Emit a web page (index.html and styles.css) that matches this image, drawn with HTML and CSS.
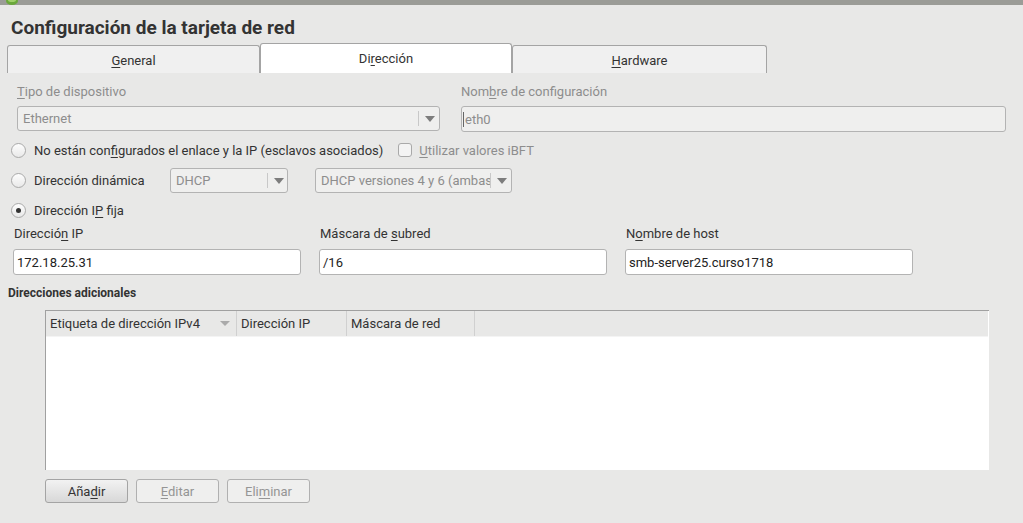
FILE: index.html
```html
<!DOCTYPE html>
<html lang="es">
<head>
<meta charset="utf-8">
<title>Configuración de la tarjeta de red</title>
<link rel="stylesheet" href="styles.css">
</head>
<body>
<div class="topbar"><svg class="appicon" width="16" height="6" viewBox="0 0 16 6"><ellipse cx="8" cy="1" rx="6" ry="4" fill="#6aa83a"/><ellipse cx="8" cy="0" rx="4" ry="2" fill="#9fd06a"/></svg></div>
<h1 class="title">Configuración de la tarjeta de red</h1>
<div class="tabs">
  <div class="tab"><span><u>G</u>eneral</span></div>
  <div class="tab active"><span>Di<u>r</u>ección</span></div>
  <div class="tab"><span><u>H</u>ardware</span></div>
</div>
<div class="content">
  <div class="devrow">
    <div class="field dev">
      <div class="label disabled"><u>T</u>ipo de dispositivo</div>
      <div class="combo disabled-box"><span class="ctext">Ethernet</span><span class="carrow"></span></div>
    </div>
    <div class="field conf">
      <div class="label disabled">Nom<u>b</u>re de configuración</div>
      <div class="input disabled-box"><span class="cursor"></span><span class="itext">eth0</span></div>
    </div>
  </div>
  <div class="radiorow">
    <span class="radio"></span><span class="rlabel">No están con<u>f</u>igurados el enlace y la IP (esclavos asociados)</span>
    <span class="check"></span><span class="clabel disabled"><u>U</u>tilizar valores iBFT</span>
  </div>
  <div class="radiorow">
    <span class="radio"></span><span class="rlabel dyn">Dirección dinámica</span>
    <div class="combo small disabled-box"><span class="ctext">DHCP</span><span class="carrow"></span></div>
    <div class="combo medium disabled-box"><span class="ctext">DHCP versiones 4 y 6 (ambas</span><span class="carrow"></span></div>
  </div>
  <div class="radiorow">
    <span class="radio on"></span><span class="rlabel">Dirección I<u>P</u> fija</span>
  </div>
  <div class="ipgrid">
    <div class="field">
      <div class="label">Direcció<u>n</u> IP</div>
      <div class="input white"><span class="itext">172.18.25.31</span></div>
    </div>
    <div class="field">
      <div class="label">Máscara de <u>s</u>ubred</div>
      <div class="input white"><span class="itext">/16</span></div>
    </div>
    <div class="field">
      <div class="label">N<u>o</u>mbre de host</div>
      <div class="input white"><span class="itext">smb-server25.curso1718</span></div>
    </div>
  </div>
  <div class="section">Direcciones adicionales</div>
  <div class="table">
    <div class="thead">
      <div class="th c1">Etiqueta de dirección IPv4<span class="sort"></span></div>
      <div class="th c2">Dirección IP</div>
      <div class="th c3">Máscara de red</div>
    </div>
    <div class="tbody"></div>
  </div>
  <div class="buttons">
    <button class="btn primary">Aña<u>d</u>ir</button>
    <button class="btn off"><u>E</u>ditar</button>
    <button class="btn off">Eli<u>m</u>inar</button>
  </div>
</div>
</body>
</html>
```
FILE: styles.css
```css
* { box-sizing: border-box; }
html, body { margin: 0; padding: 0; }
body {
  width: 1023px;
  height: 523px;
  overflow: hidden;
  background: #e8e8e7;
  font-family: Roboto, "Liberation Sans", sans-serif;
  font-size: 13px;
  color: #333;
}
u { text-decoration: underline; text-underline-offset: 2px; }
.topbar {
  height: 5px;
  background: #9b9c97;
  position: relative;
}
.appicon { position: absolute; left: 4px; top: 0; }
.title {
  margin: 0;
  padding: 11px 0 0 11px;
  height: 40px;
  font-size: 19px;
  line-height: 24px;
  font-weight: 700;
  color: #333;
}
.tabs {
  display: flex;
  align-items: flex-end;
  margin-left: 7px;
  height: 28px;
}
.tab {
  width: 253px;
  height: 28px;
  background: #f0f0f0;
  border: 1px solid #a4a4a4;
  border-bottom: none;
  border-radius: 3px 3px 0 0;
  display: flex;
  align-items: center;
  justify-content: center;
  padding-top: 2px;
}
.tab.active {
  width: 252px;
  height: 30px;
  background: #fff;
  padding-top: 0;
}
.tab:last-child { width: 255px; }
.content { padding-top: 11px; }
.label { height: 16px; line-height: 16px; }
.disabled { color: #8d8d8d; }
.devrow {
  display: flex;
  gap: 21px;
  padding-left: 17px;
}
.field { display: flex; flex-direction: column; gap: 6px; }
.dev { width: 423px; }
.conf { width: 545px; }
.combo, .input {
  height: 25px;
  border: 1px solid #b3b3b3;
  border-radius: 3px;
  display: flex;
  align-items: center;
  position: relative;
  overflow: hidden;
}
.disabled-box { background: #efefee; color: #8d8d8d; }
.ctext { padding-left: 5px; flex: 1; white-space: nowrap; overflow: hidden; }
.carrow {
  width: 21px;
  height: 15px;
  border-left: 1px solid #c8c8c8;
  flex: none;
  position: relative;
}
.carrow::after {
  content: "";
  position: absolute;
  left: 6px;
  top: 5px;
  border-left: 5px solid transparent;
  border-right: 5px solid transparent;
  border-top: 6px solid #7d7d7d;
}
.input { height: 26px; }
.itext { padding-left: 3px; white-space: nowrap; }
.cursor { width: 1px; height: 15px; background: #666; margin-left: 1px; }
.cursor + .itext { padding-left: 1px; }
.white { background: #fff; color: #222; }
.radiorow {
  display: flex;
  align-items: center;
  height: 30px;
  padding-left: 11px;
}
.devrow + .radiorow { margin-top: 3px; }
.radio {
  width: 15px;
  height: 15px;
  border-radius: 50%;
  border: 1px solid #a9a9a9;
  background: linear-gradient(#fdfdfd, #e9e9e9);
  flex: none;
  display: flex;
  align-items: center;
  justify-content: center;
}
.radio.on::after {
  content: "";
  width: 5px;
  height: 5px;
  border-radius: 50%;
  background: #333;
}
.rlabel { margin-left: 8px; }
.rlabel.dyn { flex: 0 0 136px; width: 136px; }
.check {
  width: 14px;
  height: 14px;
  border: 1px solid #a9a9a9;
  border-radius: 3px;
  background: #f3f3f3;
  margin-left: 15px;
  flex: none;
}
.clabel { margin-left: 7px; }
.combo.small { flex: 0 0 118px; width: 118px; height: 25px; }
.combo.medium { flex: 0 0 197px; width: 197px; height: 25px; margin-left: 27px; }
.combo.medium .ctext { text-overflow: clip; }
.combo.small .carrow { width: 20px; }
.ipgrid {
  display: grid;
  grid-template-columns: 288px 288px 288px;
  column-gap: 18px;
  padding-left: 13px;
  margin-top: 1px;
}
.ipgrid .field { gap: 7px; }
.ipgrid .label { padding-left: 1px; }
.section {
  padding-left: 8px;
  margin-top: 10px;
  font-size: 12px;
  font-weight: 700;
  height: 16px;
  line-height: 16px;
}
.table {
  margin: 9px 0 0 45px;
  width: 944px;
  height: 160px;
  border-top: 1px solid #a0a0a0;
  border-left: 1px solid #a0a0a0;
  background: #fff;
  display: flex;
  flex-direction: column;
}
.thead {
  display: flex;
  height: 26px;
  background: #e8e8e7;
  margin-right: 1px;
  border-bottom: 1px solid #f4f4f4;
}
.th {
  display: flex;
  align-items: center;
  padding-left: 4px;
  border-right: 1px solid #d0d0d0;
  position: relative;
}
.c1 { width: 191px; }
.c2 { width: 110px; }
.c3 { width: 128px; }
.sort {
  position: absolute;
  left: 174px;
  top: 10px;
  border-left: 5px solid transparent;
  border-right: 5px solid transparent;
  border-top: 5px solid #aaa;
}
.tbody { flex: 1; background: #fff; }
.buttons {
  display: flex;
  gap: 8px;
  margin: 9px 0 0 45px;
}
.btn {
  width: 83px;
  height: 24px;
  border: 1px solid #a4a4a4;
  border-radius: 3px;
  font-family: inherit;
  font-size: 13px;
  padding: 0;
}
.btn.primary { background: linear-gradient(#f2f2f2, #d8d8d8); color: #333; }
.btn.off { background: #efefee; color: #959595; border-color: #b0b0b0; }
```
